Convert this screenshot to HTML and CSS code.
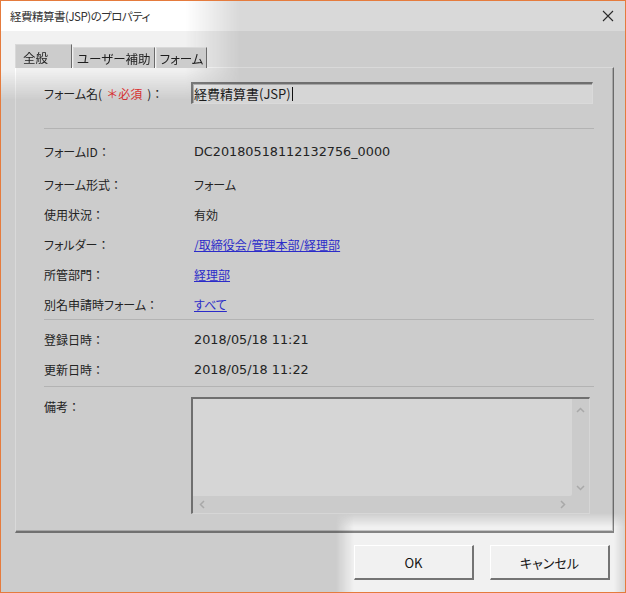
FILE: index.html
```html
<!DOCTYPE html>
<html lang="ja">
<head>
<meta charset="utf-8">
<title>経費精算書(JSP)のプロパティ</title>
<link rel="stylesheet" href="styles.css">
</head>
<body>
<div class="window">
  <div class="titlebar">
    <span class="title">経費精算書(JSP)のプロパティ</span>
    <svg class="close" width="12" height="12" viewBox="0 0 12 12"><path d="M1 1 L11 11 M11 1 L1 11" stroke="#2a2a2a" stroke-width="1.1" fill="none"/></svg>
  </div>
  <div class="body">
    <div class="tabs">
      <div class="tab active">全般</div>
      <div class="tab">ユーザー補助</div>
      <div class="tab">フォーム</div>
    </div>
    <div class="panel">
      <div class="row name-row">
        <div class="label">フォーム名<span class="wide">(</span><span class="req">＊必須</span><span class="wide">)</span><span class="colon">：</span></div>
        <div class="input"><span>経費精算書(JSP)</span><span class="caret"></span></div>
      </div>
      <div class="sep sep1"></div>
      <div class="row info first"><div class="label">フォームID<span class="colon">：</span></div><div class="value latin">DC20180518112132756_0000</div></div>
      <div class="row info"><div class="label">フォーム形式<span class="colon">：</span></div><div class="value">フォーム</div></div>
      <div class="row info"><div class="label">使用状況<span class="colon">：</span></div><div class="value">有効</div></div>
      <div class="row info"><div class="label">フォルダー<span class="colon">：</span></div><div class="value"><a class="link" href="#">/取締役会/管理本部/経理部</a></div></div>
      <div class="row info"><div class="label">所管部門<span class="colon">：</span></div><div class="value"><a class="link" href="#">経理部</a></div></div>
      <div class="row info"><div class="label">別名申請時フォーム<span class="colon">：</span></div><div class="value"><a class="link" href="#">すべて</a></div></div>
      <div class="sep"></div>
      <div class="row info second"><div class="label">登録日時<span class="colon">：</span></div><div class="value latin">2018/05/18 11:21</div></div>
      <div class="row info"><div class="label">更新日時<span class="colon">：</span></div><div class="value latin">2018/05/18 11:22</div></div>
      <div class="sep sep3"></div>
      <div class="row notes-row">
        <div class="label">備考<span class="colon">：</span></div>
        <div class="textarea">
          <div class="ta-main">
            <div class="ta-text"></div>
            <div class="vscroll">
              <svg width="9" height="6" viewBox="0 0 9 6"><path d="M1 5 L4.5 1.5 L8 5" stroke="#a9a9a9" stroke-width="1.5" fill="none"/></svg>
              <svg width="9" height="6" viewBox="0 0 9 6"><path d="M1 1 L4.5 4.5 L8 1" stroke="#a9a9a9" stroke-width="1.5" fill="none"/></svg>
            </div>
          </div>
          <div class="hscroll">
            <svg width="6" height="9" viewBox="0 0 6 9"><path d="M5 1 L1.5 4.5 L5 8" stroke="#a9a9a9" stroke-width="1.5" fill="none"/></svg>
            <svg width="6" height="9" viewBox="0 0 6 9"><path d="M1 1 L4.5 4.5 L1 8" stroke="#a9a9a9" stroke-width="1.5" fill="none"/></svg>
          </div>
        </div>
      </div>
    </div>
    <div class="buttons">
      <button class="btn">OK</button>
      <button class="btn">キャンセル</button>
    </div>
  </div>
  <div class="glow glow-tl"></div>
  <div class="glow glow-br"></div>
</div>
</body>
</html>
```
FILE: styles.css
```css
* { box-sizing: border-box; }
html, body { margin: 0; padding: 0; }
body {
  background: #cccccc;
  font-family: "Noto Sans CJK JP", "Noto Sans", sans-serif;
  font-feature-settings: "palt";
  font-size: 12px;
  color: #222;
}
.window {
  position: relative;
  width: 626px;
  height: 593px;
  border: 1px solid #e57b3d;
  background: #cccccc;
  display: flex;
  flex-direction: column;
  overflow: hidden;
}
.titlebar {
  height: 30px;
  flex: none;
  background: #d9d9d9;
  display: flex;
  align-items: center;
  justify-content: space-between;
  padding: 0 11px 0 9px;
}
.title {
  font-size: 11.5px;
  letter-spacing: -0.5px;
  color: #2a2a2a;
}
.close { display: block; }
.body {
  flex: 1;
  display: flex;
  flex-direction: column;
  padding: 13px 12px 0 14px;
}
.tabs {
  display: flex;
  align-items: flex-end;
  height: 24px;
  position: relative;
  z-index: 2;
  margin-bottom: -1px;
}
.tab {
  height: 21px;
  padding: 1px 3px 0 3px;
  border: 1px solid #d9d9d9;
  border-bottom: none;
  border-right: 1px solid #6a6a6a;
  background: #cccccc;
  display: flex;
  align-items: center;
  font-size: 12.5px;
  color: #1e1e1e;
  margin-left: 1px;
}
.tab.active {
  height: 24px;
  width: 57px;
  margin-left: 0;
  padding-left: 7px;
  padding-top: 2px;
}
.panel {
  width: 599px;
  height: 466px;
  border-top: 1px solid #d9d9d9;
  border-left: 1px solid #d9d9d9;
  border-right: 1px solid #6a6a6a;
  border-bottom: 2px solid #707070;
  box-shadow: inset -1px -1px 0 #a6a6a6;
  padding: 0 19px 0 28px;
  display: flex;
  flex-direction: column;
}
.row { display: flex; align-items: center; }
.label { width: 147px; flex: none; color: #232323; white-space: nowrap; }
.colon, .wide { font-feature-settings: normal; }
.req { color: #cf2f2f; font-feature-settings: normal; margin: 0 5px 0 4px; }
.value { color: #232323; padding-left: 3px; }
.latin { font-family: "DejaVu Sans", "Noto Sans CJK JP", sans-serif; font-size: 12.8px; }
.name-row { margin-top: 14px; height: 22px; }
.input {
  width: 402px;
  height: 22px;
  background: #d6d6d6;
  border-top: 2px solid #6f6f6f;
  border-left: 2px solid #6f6f6f;
  border-right: 1px solid #dadada;
  border-bottom: 1px solid #dadada;
  box-shadow: inset 1px 1px 0 #a5a5a5;
  display: flex;
  align-items: center;
  padding-left: 1px;
  font-size: 13px;
  color: #1c1c1c;
}
.caret { width: 1px; height: 14px; background: #111; margin-left: 1px; }
.sep { height: 1px; background: #b3b3b3; flex: none; }
.sep1 { margin-top: 24px; }
.info { height: 30px; }
.info.first { margin-top: 7px; margin-bottom: 3px; }
.info.second { margin-top: 4px; }
.sep3 { margin-top: 2px; }
.notes-row { align-items: flex-start; margin-top: 10px; }
.notes-row .label { padding-top: 1px; line-height: 18px; }
.link { color: #2b2bc9; text-decoration: underline; }
.textarea {
  width: 399px;
  height: 117px;
  border-top: 2px solid #6f6f6f;
  border-left: 2px solid #6f6f6f;
  border-right: 1px solid #d6d6d6;
  border-bottom: 1px solid #d6d6d6;
  display: flex;
  flex-direction: column;
  background: #cbcbcb;
}
.ta-main { flex: 1; display: flex; }
.ta-text { flex: 1; background: #d6d6d6; border-bottom-right-radius: 2px; }
.vscroll {
  width: 17px;
  display: flex;
  flex-direction: column;
  justify-content: space-between;
  align-items: center;
  padding: 8px 0 5px;
}
.vscroll svg, .hscroll svg { display: block; }
.hscroll {
  height: 17px;
  display: flex;
  justify-content: space-between;
  align-items: center;
  padding: 0 23px 0 6px;
}
.buttons {
  display: flex;
  justify-content: flex-end;
  gap: 16px;
  margin-top: 12px;
  padding-right: 3px;
}
.btn {
  width: 120px;
  height: 35px;
  background: #cccccc;
  border-top: 1px solid #dcdcdc;
  border-left: 1px solid #dcdcdc;
  border-right: 2px solid #626262;
  border-bottom: 2px solid #626262;
  font-family: "Noto Sans CJK JP", "Noto Sans", sans-serif;
  font-feature-settings: "palt";
  font-size: 13px;
  color: #111;
  padding: 0;
}
.glow {
  position: absolute;
  pointer-events: none;
  backdrop-filter: brightness(1.18);
  -webkit-backdrop-filter: brightness(1.18);
}
.glow-tl {
  left: -1px;
  top: -1px;
  width: 240px;
  height: 100px;
  -webkit-mask-image: linear-gradient(to right, #000 0, #000 185px, transparent 240px), linear-gradient(to bottom, #000 0, #000 70px, transparent 100px);
  -webkit-mask-composite: source-in;
  mask-image: linear-gradient(to right, #000 0, #000 185px, transparent 240px), linear-gradient(to bottom, #000 0, #000 70px, transparent 100px);
  mask-composite: intersect;
}
.glow-br {
  left: 335px;
  top: 512px;
  width: 292px;
  height: 82px;
  -webkit-mask-image: linear-gradient(to right, transparent 0, #000 18px, #000 278px, transparent 292px), linear-gradient(to bottom, transparent 0, #000 14px);
  -webkit-mask-composite: source-in;
  mask-image: linear-gradient(to right, transparent 0, #000 18px, #000 278px, transparent 292px), linear-gradient(to bottom, transparent 0, #000 14px);
  mask-composite: intersect;
}
```
